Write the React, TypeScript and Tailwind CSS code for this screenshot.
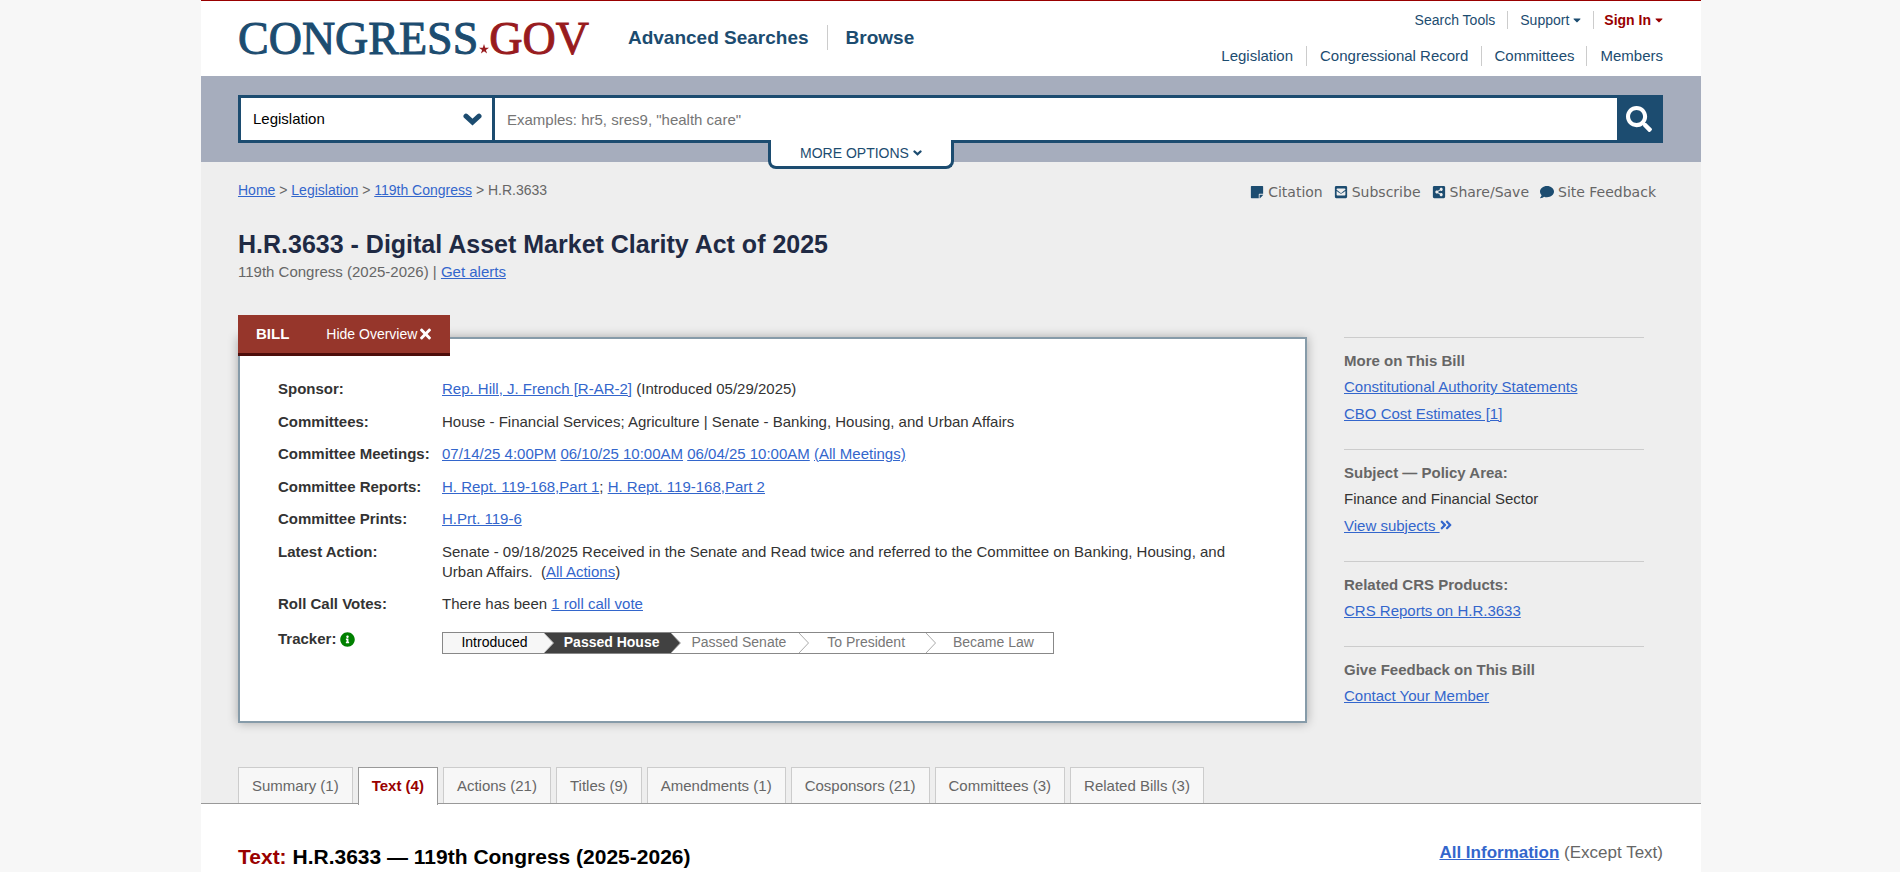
import type { ReactNode } from "react";
import {
  FaAngleDoubleRight,
  FaCaretDown,
  FaComment,
  FaEnvelopeSquare,
  FaInfoCircle,
  FaSearch,
  FaShareAltSquare,
  FaStickyNote,
  FaTimes,
} from "react-icons/fa";

function Link({ children, className = "" }: { children: ReactNode; className?: string }) {
  return (
    <a href="#" className={`text-[#3366cc] underline ${className}`}>
      {children}
    </a>
  );
}

function Chevron({ className }: { className: string }) {
  return (
    <svg viewBox="0 0 19 13" className={className} aria-hidden="true">
      <path
        d="M3 3.2L9.5 9.2L16 3.2"
        fill="none"
        stroke="currentColor"
        strokeWidth="5"
        strokeLinecap="round"
      />
    </svg>
  );
}

function Logo() {
  return (
    <a
      href="#"
      aria-label="Congress.gov"
      className="flex items-baseline font-['Liberation_Serif',serif] text-[46px] leading-[48px] text-[#1c4c70] [-webkit-text-stroke:1px]"
    >
      <span>CONGRESS</span>
      <svg viewBox="0 0 24 24" className="ml-px size-2.5 text-[#981b1e]" aria-hidden="true">
        <path
          fill="currentColor"
          d="M12 0l2.9 8.7H24l-7.4 5.4L19.4 23 12 17.6 4.6 23l2.8-8.9L0 8.7h9.1z"
        />
      </svg>
      <span className="text-[#981b1e]">GOV</span>
    </a>
  );
}

function Header() {
  return (
    <header className="flex h-[76px] items-start justify-between border-t border-[#990000] bg-white pl-[37px] pr-[38px] text-[#1c4c70]">
      <div className="flex items-start pt-3.5">
        <Logo />
        <nav className="ml-[39px] mt-2.5 flex items-center text-[19px] font-bold leading-[25px]">
          <a href="#" className="border-r border-[#cccccc] pr-[18px]">
            Advanced Searches
          </a>
          <a href="#" className="pl-[18px]">
            Browse
          </a>
        </nav>
      </div>
      <div className="flex flex-col items-end pt-2.5">
        <nav className="flex text-[14px] leading-[18px]">
          <a href="#" className="border-r border-[#cccccc] pr-3">
            Search Tools
          </a>
          <a href="#" className="flex items-center gap-1 border-r border-[#cccccc] px-3">
            Support <FaCaretDown className="h-3 w-2" />
          </a>
          <a href="#" className="flex items-center gap-1 pl-2.5 font-bold text-[#990000]">
            Sign In <FaCaretDown className="h-3 w-2" />
          </a>
        </nav>
        <nav className="mt-[17px] flex text-[15px] leading-5">
          <a href="#" className="border-r border-[#cccccc] pr-[13px]">
            Legislation
          </a>
          <a href="#" className="border-r border-[#cccccc] px-[13px]">
            Congressional Record
          </a>
          <a href="#" className="border-r border-[#cccccc] px-3">
            Committees
          </a>
          <a href="#" className="pl-[13px]">
            Members
          </a>
        </nav>
      </div>
    </header>
  );
}

function SearchBar() {
  return (
    <div className="relative h-[86px] bg-[#a6adbd] pl-[37px] pr-[38px] pt-[19px]">
      <form className="flex h-12 border-[3px] border-[#1c4c70] bg-white text-[15px]">
        <div className="relative flex w-[254px] border-r-[3px] border-[#1c4c70]">
          <select
            aria-label="Collection"
            className="w-full appearance-none bg-transparent pl-3 text-black outline-none"
          >
            <option>Legislation</option>
          </select>
          <Chevron className="pointer-events-none absolute right-2.5 top-[15px] h-[13px] w-[19px] text-[#1c4c70]" />
        </div>
        <input
          type="text"
          aria-label="Search"
          placeholder={'Examples: hr5, sres9, "health care"'}
          className="min-w-0 flex-1 bg-transparent px-3 pt-0.5 text-black outline-none placeholder:text-[#767676]"
        />
        <button
          type="button"
          aria-label="Search"
          className="flex w-[43px] items-center justify-center bg-[#1c4c70] text-white"
        >
          <FaSearch className="size-[26px]" />
        </button>
      </form>
      <button
        type="button"
        className="absolute left-[567px] top-16 flex h-[29px] w-[186px] items-center justify-center gap-1 rounded-b-lg border-x-[3px] border-b-[3px] border-[#1c4c70] bg-white text-[14px] text-[#1c4c70]"
      >
        MORE OPTIONS <Chevron className="h-1.5 w-[9px]" />
      </button>
    </div>
  );
}

const tools = [
  { label: "Citation", Icon: FaStickyNote },
  { label: "Subscribe", Icon: FaEnvelopeSquare },
  { label: "Share/Save", Icon: FaShareAltSquare },
  { label: "Site Feedback", Icon: FaComment },
];

function TopMatter() {
  return (
    <div>
      <div className="flex items-start justify-between pt-[18px]">
        <nav aria-label="Breadcrumb" className="text-[14px] leading-5 text-[#666666]">
          <Link>Home</Link> &gt; <Link>Legislation</Link> &gt; <Link>119th Congress</Link> &gt; H.R.3633
        </nav>
        <ul className="mr-2 mt-0.5 flex gap-[11px] font-['DejaVu_Sans',sans-serif] text-[14px] leading-5 text-[#666666]">
          {tools.map(({ label, Icon }) => (
            <li key={label}>
              <a href="#" className="flex items-center gap-1">
                <Icon className="size-3.5 text-[#1c4c70]" />
                {label}
              </a>
            </li>
          ))}
        </ul>
      </div>
      <h1 className="mt-[26px] text-[25px] font-bold leading-8 text-[#1f2a44]">
        H.R.3633 - Digital Asset Market Clarity Act of 2025
      </h1>
      <p className="mt-0.5 text-[15px] leading-5 text-[#666666]">
        119th Congress (2025-2026) | <Link>Get alerts</Link>
      </p>
    </div>
  );
}

const stages = ["Passed House", "Passed Senate", "To President", "Became Law"];

function Tracker() {
  return (
    <ol className="mt-[5px] flex h-[22px] w-[612px] border border-[#888888] bg-white text-[14px] leading-[18px] text-[#777777]">
      <li className="w-[101px] bg-[#f7f7f7] pl-0.5 text-center text-black">Introduced</li>
      {stages.map((stage, i) => (
        <li
          key={stage}
          className={i === 0 ? "flex flex-1 bg-[#414141] font-bold text-white" : "flex flex-1"}
        >
          <svg viewBox="0 0 10 20" className="h-5 w-2.5 shrink-0" aria-hidden="true">
            {i < 2 && <path d="M0 0L9.5 10L0 20z" fill={i === 0 ? "#f7f7f7" : "#414141"} />}
            {i === 1 && <path d="M0 0H10V20H0L9.5 10z" fill="#ffffff" />}
            <path d="M0 0L9.5 10L0 20" fill="none" stroke="#aaaaaa" />
          </svg>
          <span className="flex-1 pr-0.5 text-center">{stage}</span>
        </li>
      ))}
    </ol>
  );
}

const rows: { label: ReactNode; value: ReactNode }[] = [
  {
    label: "Sponsor:",
    value: (
      <>
        <Link>Rep. Hill, J. French [R-AR-2]</Link> (Introduced 05/29/2025)
      </>
    ),
  },
  {
    label: "Committees:",
    value: "House - Financial Services; Agriculture | Senate - Banking, Housing, and Urban Affairs",
  },
  {
    label: "Committee Meetings:",
    value: (
      <>
        <Link>07/14/25 4:00PM</Link> <Link>06/10/25 10:00AM</Link> <Link>06/04/25 10:00AM</Link>{" "}
        <Link>(All Meetings)</Link>
      </>
    ),
  },
  {
    label: "Committee Reports:",
    value: (
      <>
        <Link>H. Rept. 119-168,Part 1</Link>; <Link>H. Rept. 119-168,Part 2</Link>
      </>
    ),
  },
  { label: "Committee Prints:", value: <Link>H.Prt. 119-6</Link> },
  {
    label: "Latest Action:",
    value: (
      <>
        Senate - 09/18/2025 Received in the Senate and Read twice and referred to the Committee on
        Banking, Housing, and Urban Affairs. &nbsp;(<Link>All Actions</Link>)
      </>
    ),
  },
  {
    label: "Roll Call Votes:",
    value: (
      <>
        There has been <Link>1 roll call vote</Link>
      </>
    ),
  },
  {
    label: (
      <span className="flex items-center gap-1 pt-0.5">
        Tracker: <FaInfoCircle className="size-[15px] text-[#008000]" />
      </span>
    ),
    value: <Tracker />,
  },
];

function Overview() {
  return (
    <section className="relative mt-[22px] min-h-[386px] w-[1069px] border-2 border-[#869ba9] bg-white pb-14 pl-[38px] pr-[60px] pt-[34px] shadow-[0_0_10px_rgba(0,0,0,0.3)]">
      <div className="absolute -left-0.5 -top-6 flex h-[41px] w-[212px] items-center border-b-[3px] border-[#4d0d0a] bg-[#96362b] pl-[18px] text-[14px] text-white">
        <h2 className="text-[15px] font-bold">BILL</h2>
        <button type="button" className="ml-[37px] flex items-center gap-[3px]">
          Hide Overview <FaTimes className="h-4 w-[11px]" />
        </button>
      </div>
      <table className="text-left text-[15px] leading-5 text-[#333333]">
        <tbody>
          {rows.map((row, i) => (
            <tr key={i} className="align-top odd:*:pb-[7px]">
              <th className="w-[164px] whitespace-nowrap py-1.5 font-bold">{row.label}</th>
              <td className="py-1.5">{row.value}</td>
            </tr>
          ))}
        </tbody>
      </table>
    </section>
  );
}

function SideBlock({ title, children }: { title: string; children: ReactNode }) {
  return (
    <section className="border-t border-[#cccccc] pb-[22px] pt-2.5">
      <h3 className="text-[15px] font-bold leading-[25px] text-[#666666]">{title}</h3>
      <div className="flex flex-col items-start text-[15px] leading-[27px] text-[#333333]">{children}</div>
    </section>
  );
}

function Sidebar() {
  return (
    <aside className="mt-[22px] w-[300px]">
      <SideBlock title="More on This Bill">
        <Link>Constitutional Authority Statements</Link>
        <Link>CBO Cost Estimates [1]</Link>
      </SideBlock>
      <SideBlock title="Subject — Policy Area:">
        <span>Finance and Financial Sector</span>
        <Link>
          View subjects <FaAngleDoubleRight className="-ml-px inline size-3.5 align-[-1px]" />
        </Link>
      </SideBlock>
      <SideBlock title="Related CRS Products:">
        <Link>CRS Reports on H.R.3633</Link>
      </SideBlock>
      <SideBlock title="Give Feedback on This Bill">
        <Link>Contact Your Member</Link>
      </SideBlock>
    </aside>
  );
}

const tabs = [
  "Summary (1)",
  "Text (4)",
  "Actions (21)",
  "Titles (9)",
  "Amendments (1)",
  "Cosponsors (21)",
  "Committees (3)",
  "Related Bills (3)",
];

function Tabs() {
  return (
    <nav className="mt-9 flex gap-[5px] border-b border-[#999999] px-[37px] text-[15px] leading-[35px]">
      {tabs.map((tab) => (
        <a
          key={tab}
          href="#"
          className={
            tab === "Text (4)"
              ? "-mb-0.5 border border-b-0 border-[#999999] bg-white px-[13px] pb-0.5 font-bold text-[#990000]"
              : "border border-b-0 border-[#cccccc] bg-[#f7f7f7] px-[13px] text-[#666666]"
          }
        >
          {tab}
        </a>
      ))}
    </nav>
  );
}

export default function App() {
  return (
    <div className="min-h-screen bg-[#f7f7f7] pl-0.5 font-['Liberation_Sans',Arial,sans-serif]">
      <div className="mx-auto max-w-[1500px] bg-[#eeeeee]">
        <Header />
        <SearchBar />
        <div className="px-[37px]">
          <TopMatter />
          <div className="mt-[33px] flex items-start gap-[37px]">
            <Overview />
            <Sidebar />
          </div>
        </div>
        <Tabs />
        <main className="flex items-start justify-between bg-white pl-[37px] pr-[38px] pt-[37px]">
          <h2 className="mt-0.5 pb-0.5 text-[21px] font-bold leading-7 text-black">
            <span className="text-[#990000]">Text:</span> H.R.3633 — 119th Congress (2025-2026)
          </h2>
          <p className="text-[17px] leading-6 text-[#666666]">
            <Link className="font-bold">All Information</Link> (Except Text)
          </p>
        </main>
      </div>
    </div>
  );
}
